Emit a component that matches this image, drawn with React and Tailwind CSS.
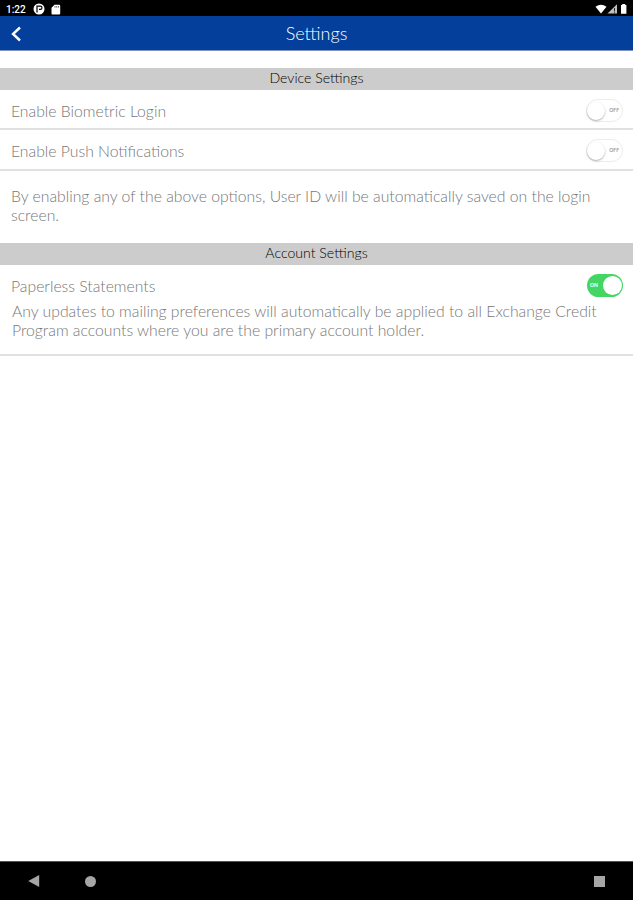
import React, { useState } from 'react';

/* Rounded on/off switch with its label printed on the track */
const Toggle = ({ checked, onChange, label }) => (
  <button
    type="button"
    role="switch"
    aria-checked={checked}
    aria-label={label}
    onClick={() => onChange(!checked)}
    className={
      checked
        ? 'flex h-[23px] w-9 shrink-0 items-center justify-between rounded-full bg-[#44d662] pr-px pl-[3px]'
        : 'flex h-[23px] w-[37px] shrink-0 items-center justify-between rounded-full border border-[#ececec] bg-white pr-[3px]'
    }
  >
    {checked && <span className="text-[5px] leading-none font-black text-white">ON</span>}
    <span
      className={
        checked
          ? 'h-[19px] w-[19px] rounded-full bg-white'
          : 'h-[18px] w-[18px] rounded-full bg-white shadow-[0_1px_2px_rgba(0,0,0,0.3)]'
      }
    />
    {!checked && <span className="text-[5px] leading-none font-bold text-[#999999]">OFF</span>}
  </button>
);

const SectionTitle = ({ children }) => (
  <h2 className="h-[22px] bg-[#cccccc] text-center text-[14.1px] leading-[20px] font-light text-black">
    {children}
  </h2>
);

const StatusBar = () => (
  <div className="flex h-4 shrink-0 items-center justify-between bg-black pr-[5px] pl-[6px] text-white">
    <div className="flex items-center">
      <span className="w-[27px] pt-[3px] font-[Roboto,sans-serif] text-[10px] leading-none font-medium">1:22</span>
      <svg className="mt-[2px] h-3 w-3" viewBox="0 0 12 12">
        <circle cx="6" cy="6" r="5.5" fill="white" />
        <path d="M4 9.5V3.2h3.4a1.6 1.6 0 0 1 0 3.2H6" fill="none" stroke="black" strokeWidth="1.2" />
      </svg>
      <svg className="mt-[2px] ml-[6px] h-[11px] w-[10px]" viewBox="0 0 10 11">
        <path d="M3.5 0.8H8.2a1 1 0 0 1 1 1V9.5a1 1 0 0 1-1 1H1.5a1 1 0 0 1-1-1V3.8z" fill="white" />
        <path d="M4 2v1.6M5.7 2v1.6M7.4 2v1.6" stroke="black" strokeWidth="0.6" />
      </svg>
    </div>
    <svg className="mt-[2px] h-3 w-[33px]" viewBox="0 0 33 12">
      <path d="M0.5 3.8Q6 -0.2 11.5 3.8L6 10.5z" fill="white" />
      <path d="M12.5 10.5 22 1.2v9.3z" fill="white" opacity="0.75" />
      <path d="M19.5 5v3.5M19.5 9.3v1" stroke="black" strokeWidth="0.8" />
      <path d="M26 2h1.2V1h3v1h1.2v8.7H26z" fill="white" />
    </svg>
  </div>
);

const NavBar = () => (
  <nav className="mt-auto flex h-[39px] shrink-0 items-center border-t border-[#555555] bg-black pl-7 text-[#a6a6a6]">
    <svg className="h-3 w-3" viewBox="0 0 12 12" fill="currentColor">
      <path d="M0.2 6 11.2 0v12z" />
    </svg>
    <div className="ml-[45px] h-[11px] w-[11px] rounded-full bg-[#a6a6a6]" />
    <div className="mr-[28px] ml-auto h-[11px] w-[11px] bg-[#a6a6a6]" />
  </nav>
);

const App = () => {
  const [biometric, setBiometric] = useState(false);
  const [push, setPush] = useState(false);
  const [paperless, setPaperless] = useState(true);

  return (
    <div className="flex h-[900px] w-[633px] flex-col overflow-hidden bg-white font-[Lato,sans-serif] text-[15.75px] font-light text-[#777777]">
      <StatusBar />

      <header className="grid h-[35px] shrink-0 grid-cols-[1fr_auto_1fr] items-center border-b border-[#8290c0] bg-[#033f9b] text-white">
        <button type="button" aria-label="Back" className="mt-[2px] ml-[10px] w-3">
          <svg className="h-4 w-3" viewBox="0 0 12 16" fill="none" stroke="white" strokeWidth="2.4">
            <path d="M10 1.5 3 8l7 6.5" />
          </svg>
        </button>
        <h1 className="text-[18px] leading-none">Settings</h1>
      </header>

      {/* Device settings */}
      <section className="pt-[17px]">
        <SectionTitle>Device Settings</SectionTitle>
        <div className="flex h-10 items-center justify-between border-b-2 border-[#e0e0e0] pt-[3px] pr-[10px] pl-[11px]">
          <span>Enable Biometric Login</span>
          <Toggle checked={biometric} onChange={setBiometric} label="Enable Biometric Login" />
        </div>
        <div className="flex h-[41px] items-center justify-between border-b-2 border-[#e0e0e0] pt-[2px] pr-[10px] pl-[11px]">
          <span>Enable Push Notifications</span>
          <Toggle checked={push} onChange={setPush} label="Enable Push Notifications" />
        </div>
        <p className="h-[72px] pt-[15px] pr-7 pl-[11px] leading-[19px]">
          By enabling any of the above options, User ID will be automatically saved on the login screen.
        </p>
      </section>

      {/* Account settings */}
      <section className="border-b-2 border-[#e0e0e0] pb-[15px]">
        <SectionTitle>Account Settings</SectionTitle>
        <div className="flex h-9 items-center justify-between pt-[5px] pr-[10px] pl-[11px]">
          <span>Paperless Statements</span>
          <Toggle checked={paperless} onChange={setPaperless} label="Paperless Statements" />
        </div>
        <p className="pr-6 pl-3 leading-[19px]">
          Any updates to mailing preferences will automatically be applied to all Exchange Credit Program accounts
          where you are the primary account holder.
        </p>
      </section>

      <NavBar />
    </div>
  );
};

export default App;
